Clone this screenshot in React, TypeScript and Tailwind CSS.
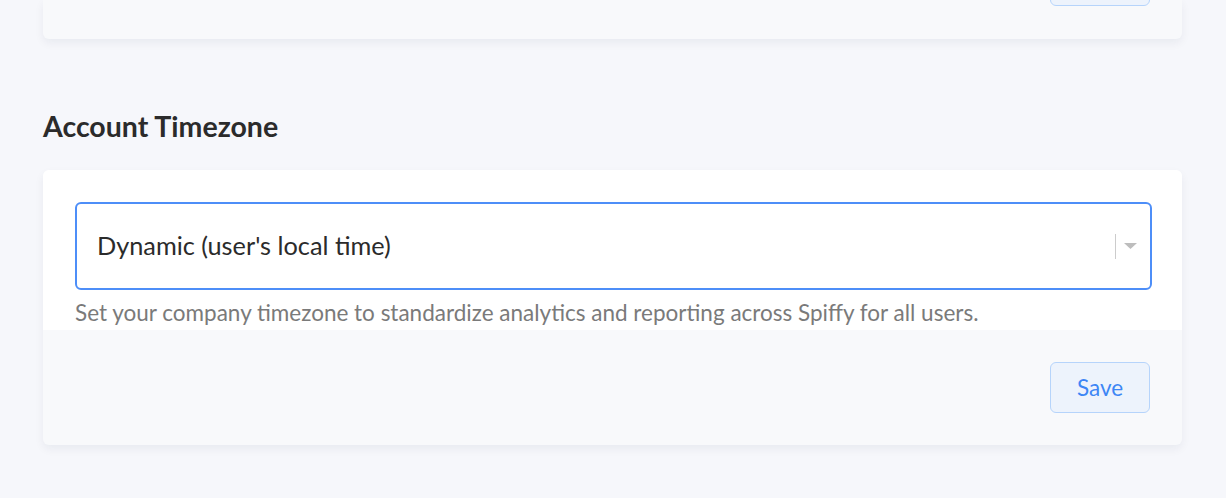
export default function App() {
  return (
    <div className="min-h-[498px] bg-[#f6f7fb] px-[43px] font-['Lato','Liberation_Sans',sans-serif] text-[#2b2b2b]">
      {/* Previous card (cut off at the top) */}
      <div className="h-[39px] w-[1139px] rounded-b-md bg-[#f8f9fb] shadow-[0_4px_10px_rgba(20,30,60,0.06)] overflow-hidden">
        <div className="flex justify-end pr-[32px]">
          <div className="-mt-[45px] h-[51px] w-[100px] rounded-md border border-[#b6d4fb] bg-[#edf3fc]" />
        </div>
      </div>

      {/* Account Timezone */}
      <h2 className="mt-[70px] text-[28.5px] font-bold leading-[34px] text-[#2b2b2b]">
        Account Timezone
      </h2>

      <div className="mt-[27px] w-[1139px] overflow-hidden rounded-md bg-[#f8f9fb] shadow-[0_4px_10px_rgba(20,30,60,0.06)]">
        <div className="bg-white px-[32px] pt-[32px] pb-[3px]">
          <div className="flex h-[88px] w-[1077px] items-center rounded-md border-2 border-[#4d8ef8] bg-white pl-[20px] pr-[13px]">
            <span className="flex-1 text-[25.3px] leading-none text-[#2b2b2b]">
              Dynamic (user's local time)
            </span>
            <span className="h-[25px] w-px bg-[#cccccc]" />
            <svg className="ml-[8px]" width="13" height="6" viewBox="0 0 13 6">
              <path d="M0 0 L13 0 L6.5 6 Z" fill="#bdbdbd" />
            </svg>
          </div>
          <p className="mt-[9px] text-[22.5px] leading-[28px] text-[#7a7a7a]">
            Set your company timezone to standardize analytics and reporting across Spiffy for all users.
          </p>
        </div>
        <div className="flex justify-end px-[32px] py-[32px]">
          <button className="h-[51px] w-[100px] rounded-md border border-[#b6d4fb] bg-[#edf3fc] text-[22.5px] text-[#3d86f5]">
            Save
          </button>
        </div>
      </div>
    </div>
  );
}
